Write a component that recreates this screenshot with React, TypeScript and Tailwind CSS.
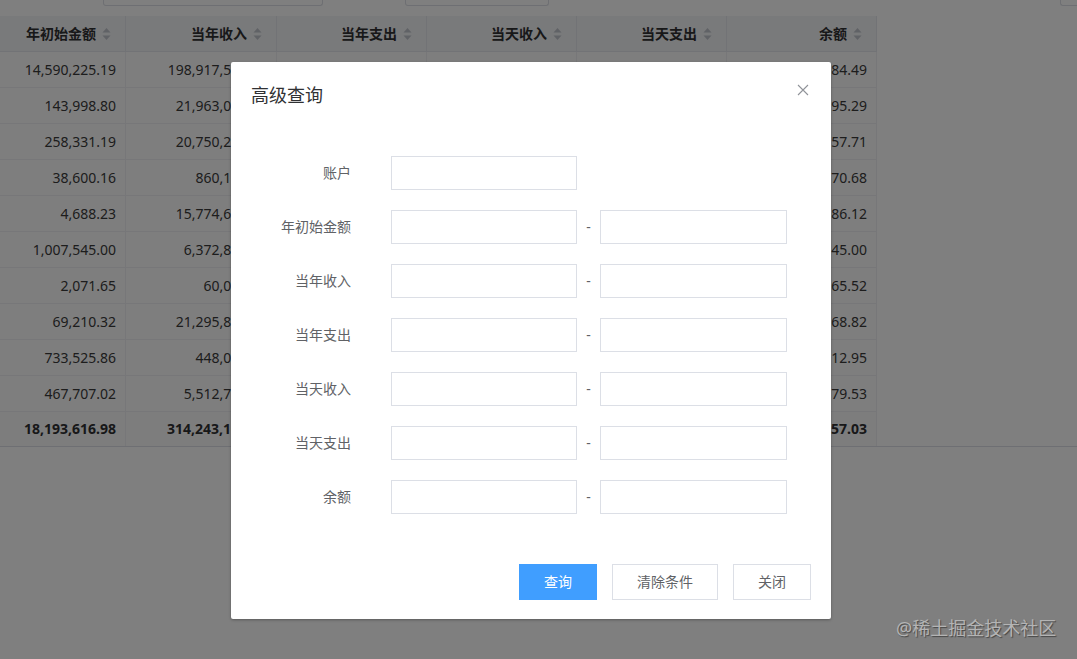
import React from "react";

const cols = [
  { title: "年初始金额", w: "w-[126px]" },
  { title: "当年收入", w: "w-[151px]" },
  { title: "当年支出", w: "w-[150px]" },
  { title: "当天收入", w: "w-[150px]" },
  { title: "当天支出", w: "w-[150px]" },
  { title: "余额", w: "w-[150px]" },
];

const rows: string[][] = [
  ["14,590,225.19", "198,917,563.42", "186,320,114.07", "1,203,556.10", "988,421.35", "27,187,684.49"],
  ["143,998.80", "21,963,041.20", "21,506,744.71", "102,330.00", "87,114.55", "600,295.29"],
  ["258,331.19", "20,750,218.66", "20,401,392.14", "88,410.23", "66,872.40", "607,157.71"],
  ["38,600.16", "860,170.00", "828,099.48", "12,000.00", "9,840.32", "70,670.68"],
  ["4,688.23", "15,774,602.48", "15,602,204.59", "54,300.00", "41,118.40", "176,886.12"],
  ["1,007,545.00", "6,372,816.00", "6,280,116.00", "30,400.00", "25,500.00", "1,100,245.00"],
  ["2,071.65", "60,012.40", "59,118.53", "800.00", "650.00", "2,965.52"],
  ["69,210.32", "21,295,834.12", "21,200,375.62", "60,120.00", "58,900.00", "164,668.82"],
  ["733,525.86", "448,010.00", "420,622.91", "3,000.00", "2,100.00", "760,912.95"],
  ["467,707.02", "5,512,745.11", "5,480,872.60", "11,200.00", "9,700.00", "499,579.53"],
];
const total = ["18,193,616.98", "314,243,102.39", "303,123,461.65", "1,566,116.33", "1,290,217.02", "31,317,057.03"];

function SortIcon() {
  return (
    <svg width="9" height="14" viewBox="0 0 9 14" className="shrink-0">
      <path d="M4.5 1 L8.5 5.5 L0.5 5.5 Z" fill="#c0c4cc" />
      <path d="M4.5 13 L8.5 8.5 L0.5 8.5 Z" fill="#c0c4cc" />
    </svg>
  );
}

function CloseIcon() {
  return (
    <svg width="12" height="12" viewBox="0 0 12 12">
      <path d="M1 1 L11 11 M11 1 L1 11" stroke="#909399" strokeWidth="1.1" />
    </svg>
  );
}

const formRows = [
  { label: "账户", range: false },
  { label: "年初始金额", range: true },
  { label: "当年收入", range: true },
  { label: "当年支出", range: true },
  { label: "当天收入", range: true },
  { label: "当天支出", range: true },
  { label: "余额", range: true },
];

export default function App() {
  return (
    <div className="relative w-[1077px] h-[659px] overflow-hidden bg-white font-['Noto_Sans','Noto_Sans_CJK_SC',sans-serif]">
      {/* Underlying page */}
      <div className="flex h-[6px] items-end">
        <div className="shrink-0 ml-[103px] h-[6px] w-[220px] border border-t-0 border-[#dcdfe6] rounded-b-[3px]" />
        <div className="shrink-0 ml-[82px] h-[6px] w-[144px] border border-t-0 border-[#dcdfe6] rounded-b-[3px]" />
        <div className="shrink-0 ml-[511px] h-[6px] w-[17px] border border-t-0 border-r-0 border-[#dcdfe6] rounded-bl-[3px]" />
      </div>
      <div className="mt-[10px] w-full border-b border-[#dcdfe6]">
        <div className="w-[877px]">
          <div className="flex h-[36px] bg-[#f3f4f6]">
            {cols.map((c) => (
              <div
                key={c.title}
                className={`${c.w} flex items-center justify-end gap-[6px] pr-[14px] border-r border-b border-[#e4e7ed] text-[14px] font-bold text-[#303133] leading-none`}
              >
                <span>{c.title}</span>
                <SortIcon />
              </div>
            ))}
          </div>
          {rows.map((r, i) => (
            <div key={i} className="flex h-[36px] bg-[#fdfdfd]">
              {r.map((v, j) => (
                <div
                  key={j}
                  className={`${cols[j].w} flex items-center justify-end pr-[9px] border-r border-b border-[#eeeff2] text-[14px] text-[#3a3a3a] leading-none`}
                >
                  {v}
                </div>
              ))}
            </div>
          ))}
          <div className="flex h-[34px] bg-[#fafafa]">
            {total.map((v, j) => (
              <div
                key={j}
                className={`${cols[j].w} flex items-center justify-end pr-[9px] border-r border-[#eeeff2] text-[14px] font-bold text-[#303133] leading-none`}
              >
                {v}
              </div>
            ))}
          </div>
        </div>
      </div>

      {/* Overlay */}
      <div className="absolute inset-0 bg-black/50" />

      {/* Dialog */}
      <div className="absolute left-[231px] top-[62px] w-[600px] h-[557px] bg-white rounded-[2px] shadow-[0_1px_3px_rgba(0,0,0,0.3)] flex flex-col">
        <div className="flex items-center justify-between pl-[20px] pr-[22px] pt-[20px] h-[46px]">
          <span className="text-[18px] leading-[26px] text-[#303133]">高级查询</span>
          <span className="-mt-[10px]">
            <CloseIcon />
          </span>
        </div>
        <div className="mt-[48px] flex flex-col gap-[20px]">
          {formRows.map((f) => (
            <div key={f.label} className="flex items-center h-[34px]">
              <div className="w-[120px] text-right text-[14px] text-[#606266] leading-none">{f.label}</div>
              <div className="ml-[40px] w-[186px] h-[34px] border border-[#dcdfe6] bg-white" />
              {f.range && (
                <>
                  <div className="w-[23px] text-center text-[14px] text-[#606266] leading-none">-</div>
                  <div className="w-[187px] h-[34px] border border-[#dcdfe6] bg-white" />
                </>
              )}
            </div>
          ))}
        </div>
        <div className="mt-[50px] flex justify-end gap-[15px] pr-[20px]">
          <button className="w-[78px] h-[36px] bg-[#409eff] text-white text-[14px] leading-none">查询</button>
          <button className="w-[106px] h-[36px] border border-[#dcdfe6] bg-white text-[#606266] text-[14px] leading-none">清除条件</button>
          <button className="w-[78px] h-[36px] border border-[#dcdfe6] bg-white text-[#606266] text-[14px] leading-none">关闭</button>
        </div>
      </div>

      {/* Watermark */}
      <div className="absolute left-[896px] top-[616px] text-[18px] leading-[24px] text-[#b4b4b4] [text-shadow:1px_1px_1px_rgba(0,0,0,0.45)] whitespace-nowrap">
        @稀土掘金技术社区
      </div>
    </div>
  );
}
